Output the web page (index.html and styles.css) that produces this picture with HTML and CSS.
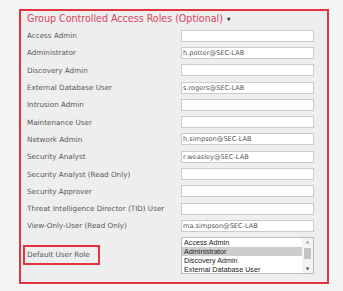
FILE: index.html
```html
<!DOCTYPE html>
<html lang="en">
<head>
  <meta charset="UTF-8">
  <meta name="viewport" content="width=device-width, initial-scale=1.0">
  <title>Group Controlled Access Roles</title>
  <link rel="stylesheet" href="styles.css">
</head>
<body>
  <div class="panel">
    <div class="panel-title">Group Controlled Access Roles (Optional) <span class="caret">&#9660;</span></div>

    <div class="roles">
      <div class="role"><label>Access Admin</label><input type="text" value=""></div>
      <div class="role"><label>Administrator</label><input type="text" value="h.potter@SEC-LAB"></div>
      <div class="role"><label>Discovery Admin</label><input type="text" value=""></div>
      <div class="role"><label>External Database User</label><input type="text" value="s.rogers@SEC-LAB"></div>
      <div class="role"><label>Intrusion Admin</label><input type="text" value=""></div>
      <div class="role"><label>Maintenance User</label><input type="text" value=""></div>
      <div class="role"><label>Network Admin</label><input type="text" value="h.simpson@SEC-LAB"></div>
      <div class="role"><label>Security Analyst</label><input type="text" value="r.weasley@SEC-LAB"></div>
      <div class="role"><label>Security Analyst (Read Only)</label><input type="text" value=""></div>
      <div class="role"><label>Security Approver</label><input type="text" value=""></div>
      <div class="role"><label>Threat Intelligence Director (TID) User</label><input type="text" value=""></div>
      <div class="role"><label>View-Only-User (Read Only)</label><input type="text" value="ma.simpson@SEC-LAB"></div>
    </div>

    <div class="default-row">
      <div class="default-label">Default User Role</div>
      <div class="listbox">
        <div class="options">
          <div class="option">Access Admin</div>
          <div class="option selected">Administrator</div>
          <div class="option">Discovery Admin</div>
          <div class="option">External Database User</div>
        </div>
        <div class="scrollbar">
          <span class="arrow">&#9650;</span>
          <div class="track"><div class="thumb"></div></div>
          <span class="arrow">&#9660;</span>
        </div>
      </div>
    </div>
  </div>
</body>
</html>
```

FILE: styles.css
```css
body {
  margin: 0;
  background: #f5f5f5;
  font-family: "DejaVu Sans", Verdana, sans-serif;
}
.panel {
  margin: 9px 0 0 19px;
  width: 310px;
  box-sizing: border-box;
  border: 2px solid #e0343f;
  background: #eeeeee;
  padding: 0 13px 8px 6px;
}
.panel-title {
  height: 16px;
  line-height: 14px;
  font-family: "DejaVu Sans Condensed", "Liberation Sans", sans-serif;
  font-size: 10.6px;
  color: #d8435c;
  white-space: nowrap;
}
.caret {
  font-size: 5px;
  color: #333;
  vertical-align: middle;
  margin-left: 1px;
}
.roles {
  display: grid;
  grid-auto-rows: 17.3px;
}
.role {
  display: flex;
  align-items: center;
}
.role label,
.default-label {
  width: 154px;
  font-size: 7.2px;
  color: #585858;
  white-space: nowrap;
}
.role input {
  width: 133px;
  height: 12px;
  box-sizing: border-box;
  margin: 0;
  padding: 0 1px;
  border: 1px solid #cbcbcb;
  background: #fff;
  font-family: "DejaVu Sans", Verdana, sans-serif;
  font-size: 6.6px;
  color: #555;
  outline: none;
}
.default-row {
  display: flex;
  align-items: center;
  margin-top: 2.4px;
}
.default-label {
  width: auto;
  height: 20px;
  line-height: 16px;
  box-sizing: border-box;
  margin-left: -4px;
  padding: 0 8px 0 2px;
  border: 2px solid #e0343f;
}
.listbox {
  display: flex;
  margin-left: auto;
  width: 133px;
  height: 37px;
  box-sizing: border-box;
  border: 1px solid #bdbdbd;
  background: #fff;
}
.options {
  flex: 1;
  font-family: "Liberation Sans", Arial, sans-serif;
  font-size: 7.2px;
  color: #222;
}
.option {
  height: 9px;
  line-height: 9px;
  padding-left: 2px;
  white-space: nowrap;
}
.option.selected {
  background: #cdcdcd;
}
.scrollbar {
  width: 11px;
  display: flex;
  flex-direction: column;
  align-items: center;
  background: #f4f4f4;
}
.arrow {
  font-size: 4px;
  line-height: 8px;
  height: 8px;
  color: #999;
}
.arrow:last-child {
  color: #444;
}
.track {
  flex: 1;
  width: 100%;
  display: flex;
  justify-content: center;
}
.thumb {
  width: 7px;
  height: 11px;
  margin-top: 2px;
  background: #c4c4c4;
}
```
